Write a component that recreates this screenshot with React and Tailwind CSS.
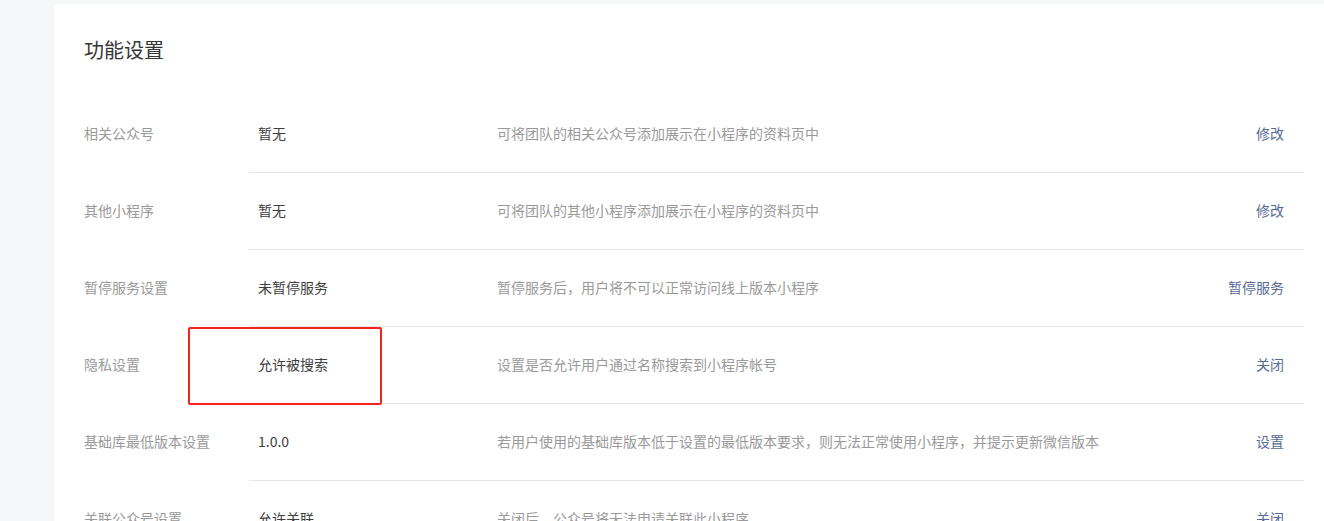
import React from "react";

const rows = [
  { label: "相关公众号", value: "暂无", desc: "可将团队的相关公众号添加展示在小程序的资料页中", action: "修改" },
  { label: "其他小程序", value: "暂无", desc: "可将团队的其他小程序添加展示在小程序的资料页中", action: "修改" },
  { label: "暂停服务设置", value: "未暂停服务", desc: "暂停服务后，用户将不可以正常访问线上版本小程序", action: "暂停服务" },
  { label: "隐私设置", value: "允许被搜索", desc: "设置是否允许用户通过名称搜索到小程序帐号", action: "关闭", mark: true },
  { label: "基础库最低版本设置", value: "1.0.0", desc: "若用户使用的基础库版本低于设置的最低版本要求，则无法正常使用小程序，并提示更新微信版本", action: "设置" },
  { label: "关联公众号设置", value: "允许关联", desc: "关闭后，公众号将无法申请关联此小程序", action: "关闭" },
];

export default function App() {
  return (
    <div
      className="w-[1324px] h-[521px] overflow-hidden bg-[#f6f7f9] pt-[4px]"
      style={{ fontFamily: '"Noto Sans CJK SC", "Noto Sans", sans-serif' }}
    >
      <div className="ml-[54px] w-[1290px] min-h-[600px] bg-white rounded-[4px] pl-[30px] pr-[40px] pt-[32px]">
        <h2 className="text-[20px] leading-[28px] text-[#353535] font-normal">功能设置</h2>
        <div className="mt-[32px]">
          {rows.map((r, i) => (
            <div key={i} className="relative flex text-[14px] leading-[20px]">
              <div className="w-[165px] shrink-0 flex items-center pb-[3px] text-[#9a9a9a]">{r.label}</div>
              <div className="flex-1 flex items-center h-[77px] pb-[3px] border-b border-[#e7e7eb]">
                <div className="w-[248px] shrink-0 pl-[9px] text-[#3e3e3e]">{r.value}</div>
                <div className="flex-1 text-[#9a9a9a]">{r.desc}</div>
                <div className="pr-[20px] text-[#576b95]">{r.action}</div>
              </div>
              {r.mark && (
                <div className="absolute left-[104px] top-0 w-[194px] h-[78px] border-[2px] border-[#f5231b] rounded-[2px]" />
              )}
            </div>
          ))}
        </div>
      </div>
    </div>
  );
}
